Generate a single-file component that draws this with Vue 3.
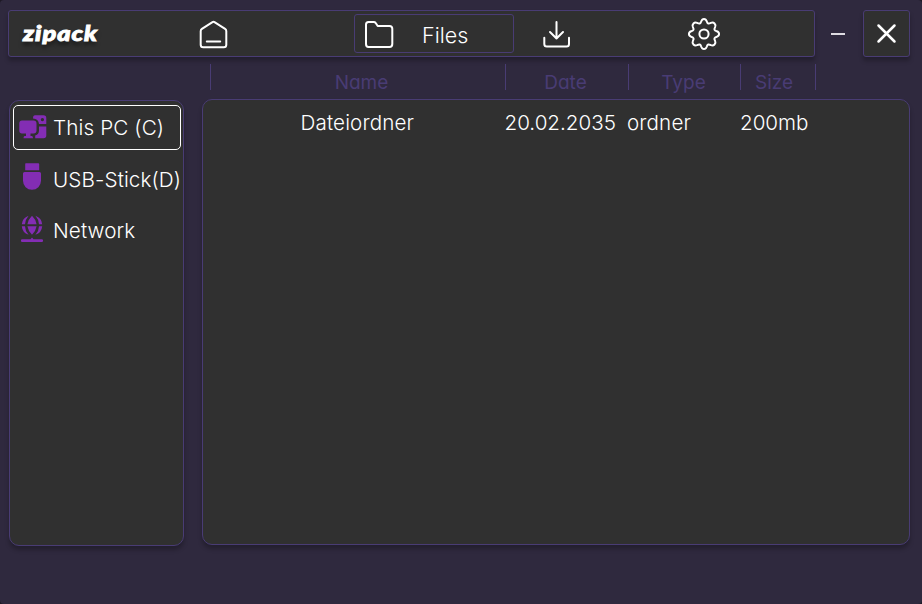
<script setup>
const columns = [
  { key: 'name', label: 'Name' },
  { key: 'date', label: 'Date' },
  { key: 'type', label: 'Type' },
  { key: 'size', label: 'Size' },
]
const files = [
  { name: 'Dateiordner', date: '20.02.2035', type: 'ordner', size: '200mb' },
]
const drives = [
  { id: 'pc', label: 'This PC (C)', active: true },
  { id: 'usb', label: 'USB-Stick(D)' },
  { id: 'net', label: 'Network' },
]
</script>

<template>
  <div class="window">
    <header class="top">
      <nav class="bar">
        <span class="logo">zipack</span>
        <button class="nav home" aria-label="Home">
          <svg width="30" height="30" viewBox="0 0 30 30">
            <path d="M2.7 11.2 Q2.7 9.7 3.9 8.9 L14.1 2.3 Q15.5 1.4 16.9 2.3 L27.1 8.9 Q28.3 9.7 28.3 11.2 V24.8 Q28.3 27.3 25.8 27.3 H5.2 Q2.7 27.3 2.7 24.8 Z M8.8 21.4 H22.2" />
          </svg>
        </button>
        <button class="nav files">
          <svg width="32" height="30" viewBox="0 0 32 30">
            <path d="M3 5.5 Q3 3 5.5 3 H10.7 Q12 3 12.7 4 L14.7 7 H26.5 Q29.3 7 29.3 9.8 V25 Q29.3 27.9 26.5 27.9 H5.5 Q3 27.9 3 25 Z" />
          </svg>
          <span>Files</span>
        </button>
        <button class="nav download" aria-label="Download">
          <svg width="30" height="30" viewBox="0 0 30 30">
            <path d="M14.5 3 V19.5 M8 13 L14.5 19.5 L21 13 M2.3 18.7 V25 Q2.3 27.5 4.8 27.5 H24.5 Q27 27.5 27 25 V18.7" />
          </svg>
        </button>
        <button class="nav settings" aria-label="Settings">
          <svg width="34" height="34" viewBox="0 0 34 34">
            <circle cx="17" cy="17" r="4.6" />
            <path d="M14.3 4.2 C15.3 1.2 18.7 1.2 19.7 4.2 C20.5 6.9 21.6 7.1 23.9 5.9 C26.7 4.6 29.4 7.3 28.1 10.1 C26.9 12.4 27.1 13.5 29.8 14.3 C32.8 15.3 32.8 18.7 29.8 19.7 C27.1 20.5 26.9 21.6 28.1 23.9 C29.4 26.7 26.7 29.4 23.9 28.1 C21.6 26.9 20.5 27.1 19.7 29.8 C18.7 32.8 15.3 32.8 14.3 29.8 C13.5 27.1 12.4 26.9 10.1 28.1 C7.3 29.4 4.6 26.7 5.9 23.9 C7.1 21.6 6.9 20.5 4.2 19.7 C1.2 18.7 1.2 15.3 4.2 14.3 C6.9 13.5 7.1 12.4 5.9 10.1 C4.6 7.3 7.3 4.6 10.1 5.9 C12.4 7.1 13.5 6.9 14.3 4.2 Z" />
          </svg>
        </button>
      </nav>
      <button class="minimize" aria-label="Minimize"><i></i></button>
      <button class="close" aria-label="Close">
        <svg width="22" height="22" viewBox="0 0 22 22">
          <path d="M2.5 2.5 L18.5 18.5 M18.5 2.5 L2.5 18.5" />
        </svg>
      </button>
    </header>

    <div class="columns">
      <span v-for="c in columns" :key="c.key" :class="['column', c.key]">{{ c.label }}</span>
    </div>

    <div class="content">
      <aside class="sidebar">
        <div v-for="d in drives" :key="d.id" :class="['drive', d.id, { active: d.active }]">
          <svg v-if="d.id === 'pc'" width="28" height="24" viewBox="0 0 28 24">
            <path d="M3 5.5 H14.5 Q17.5 5.5 17.5 8.5 V15.5 Q17.5 18.5 14.5 18.5 H11.5 V21 H13 Q14 21.2 14 23.3 H4.5 Q4.5 21.2 5.5 21 H7 V18.5 H3 Q0.3 18.5 0.3 15.5 V8.5 Q0.3 5.5 3 5.5 Z" />
            <path fill-rule="evenodd" d="M16 0.3 H24.5 Q27.3 0.3 27.3 3 V9 H20 Q19.5 4 14 3.6 Q14 0.3 16 0.3 Z M23.4 3 A1.6 1.6 0 1 0 23.41 3 Z" />
            <path d="M20 11.5 H27.3 V20.5 Q27.3 23.3 24.5 23.3 H16.2 V20.5 Q20 19.5 20 15.5 Z" />
          </svg>
          <svg v-else-if="d.id === 'usb'" width="28" height="28" viewBox="0 0 28 28">
            <path d="M7.8 0.3 H20.2 Q21.2 0.3 21.2 1.3 V7.2 H7.2 V1.3 Q7.2 0.3 7.8 0.3 Z M6.5 9 H21.5 Q23 9 23 10.5 V17.8 A9 9 0 0 1 5 17.8 V10.5 Q5 9 6.5 9 Z" />
          </svg>
          <svg v-else width="28" height="28" viewBox="0 0 28 28">
            <path d="M10.6 0.8 Q7 5 7 9.2 H3.8 Q4.3 3.2 10.6 0.8 Z M17.4 0.8 Q21 5 21 9.2 H24.2 Q23.7 3.2 17.4 0.8 Z M14 0.8 Q17.8 4.5 18.6 9.2 H9.4 Q10.2 4.5 14 0.8 Z M3.8 11.2 H7 Q7 15.5 10.6 19.8 Q4.3 17.5 3.8 11.2 Z M24.2 11.2 H21 Q21 15.5 17.4 19.8 Q23.7 17.5 24.2 11.2 Z M9.4 11.2 H18.6 Q17.8 16 14 19.8 Q10.2 16 9.4 11.2 Z M4.3 24.3 H12.5 L14 22.5 L15.5 24.3 H23.7 A1.4 1.4 0 0 1 23.7 27.1 H4.3 A1.4 1.4 0 0 1 4.3 24.3 Z" />
          </svg>
          <span>{{ d.label }}</span>
        </div>
      </aside>
      <main class="list">
        <div v-for="f in files" :key="f.name" class="row">
          <span v-for="c in columns" :key="c.key" :class="'cell-' + c.key">{{ f[c.key] }}</span>
        </div>
      </main>
    </div>
  </div>
</template>

<style>
body {
  background: #1d1924;
}
</style>

<style scoped>
.window {
  box-sizing: border-box;
  width: 922px;
  height: 604px;
  padding: 10px 12px 0 8px;
  border-radius: 4px;
  overflow: hidden;
  background: #2f293e;
  color: #fff;
  font-family: Inter, sans-serif;
}
button {
  box-sizing: border-box;
  padding: 0;
  border: 0;
  background: none;
  color: inherit;
  font: inherit;
}
svg {
  display: block;
  flex: none;
}
.top {
  display: flex;
  height: 47px;
}
.bar,
.close {
  box-sizing: border-box;
  height: 47px;
  border: 1px solid #493c74;
  border-radius: 3px;
  background: #303030;
  box-shadow: 0 4px 4px rgba(0, 0, 0, 0.25);
}
.bar {
  display: flex;
  width: 807px;
  padding: 3px 0 0 14px;
}
.logo {
  flex: none;
  width: 146px;
  margin-right: 29px;
  font: italic 900 21px/37px Lato, sans-serif;
  -webkit-text-stroke: 0.9px #fff;
  letter-spacing: 0.8px;
  text-shadow: 0 4px 4px rgba(0, 0, 0, 0.5);
  transform: scaleX(1.21);
  transform-origin: left center;
}
.nav {
  display: flex;
  align-items: center;
  height: 39px;
}
.nav svg,
.close svg {
  fill: none;
  stroke: #fff;
  stroke-width: 2;
  stroke-linecap: round;
  stroke-linejoin: round;
}
.home {
  width: 156px;
  padding-top: 2px;
}
.files {
  width: 160px;
  padding: 1px 0 0 8px;
  gap: 27px;
  border: 1px solid #493c74;
  border-radius: 3px;
  font-size: 21.5px;
  font-weight: 350;
}
.files span {
  padding-top: 2px;
}
.download {
  margin-left: 27.5px;
  padding-top: 1px;
}
.settings {
  margin-left: 115px;
  padding-top: 1px;
}
.minimize {
  display: flex;
  align-items: center;
  justify-content: center;
  width: 46px;
  margin-right: 2px;
}
.minimize i {
  width: 14px;
  height: 2px;
  background: #dedce2;
}
.close {
  display: flex;
  align-items: center;
  justify-content: center;
  width: 47px;
}
.close svg {
  stroke-width: 2.5;
}
.columns {
  display: flex;
  box-sizing: border-box;
  width: 606px;
  height: 26px;
  margin: 7px 0 0 202px;
  border-right: 1px solid #493c74;
}
.column {
  box-sizing: border-box;
  border-left: 1px solid #493c74;
  color: #493c74;
  font-size: 19px;
  font-weight: 370;
  line-height: 37px;
  text-align: center;
  font-feature-settings: 'cv11';
}
.name {
  width: 295px;
  padding-left: 7px;
}
.date {
  width: 123px;
  padding-right: 3px;
}
.type {
  width: 112px;
  padding-right: 2px;
}
.size {
  width: 75px;
  padding-right: 8px;
}
.content {
  display: flex;
  gap: 18px;
  margin-top: 9px;
  padding-left: 1px;
}
.sidebar,
.list {
  box-sizing: border-box;
  height: 446px;
  border: 1px solid #493c74;
  border-radius: 10px;
  background: #303030;
  box-shadow: 0 4px 4px rgba(0, 0, 0, 0.25);
}
.sidebar {
  display: flex;
  flex-direction: column;
  gap: 6.5px;
  width: 175px;
  margin-top: 1px;
  padding: 4px 0 0 3px;
}
.drive {
  display: flex;
  align-items: center;
  box-sizing: border-box;
  width: 168px;
  height: 45px;
  padding-left: 4.5px;
  border: 1px solid transparent;
  border-radius: 5px;
  font-size: 20.7px;
  font-weight: 350;
  letter-spacing: 0.1px;
  white-space: nowrap;
}
.drive svg {
  margin: -1px 6.5px 0 0;
  fill: #832db4;
}
.active {
  border-color: #fff;
}
.drive.usb svg,
.drive.net svg {
  margin: -5px 7px 0 -0.5px;
}
.drive.net svg {
  margin-top: -4px;
}
.list {
  flex: 1;
}
.row {
  display: flex;
  padding-top: 8px;
  font-size: 20.6px;
  font-weight: 355;
  line-height: 30px;
}
.cell-name {
  width: 204px;
  padding-left: 97.5px;
  letter-spacing: 0.15px;
}
.cell-date {
  width: 122.5px;
}
.cell-type {
  width: 113px;
  letter-spacing: 0.15px;
}
</style>
